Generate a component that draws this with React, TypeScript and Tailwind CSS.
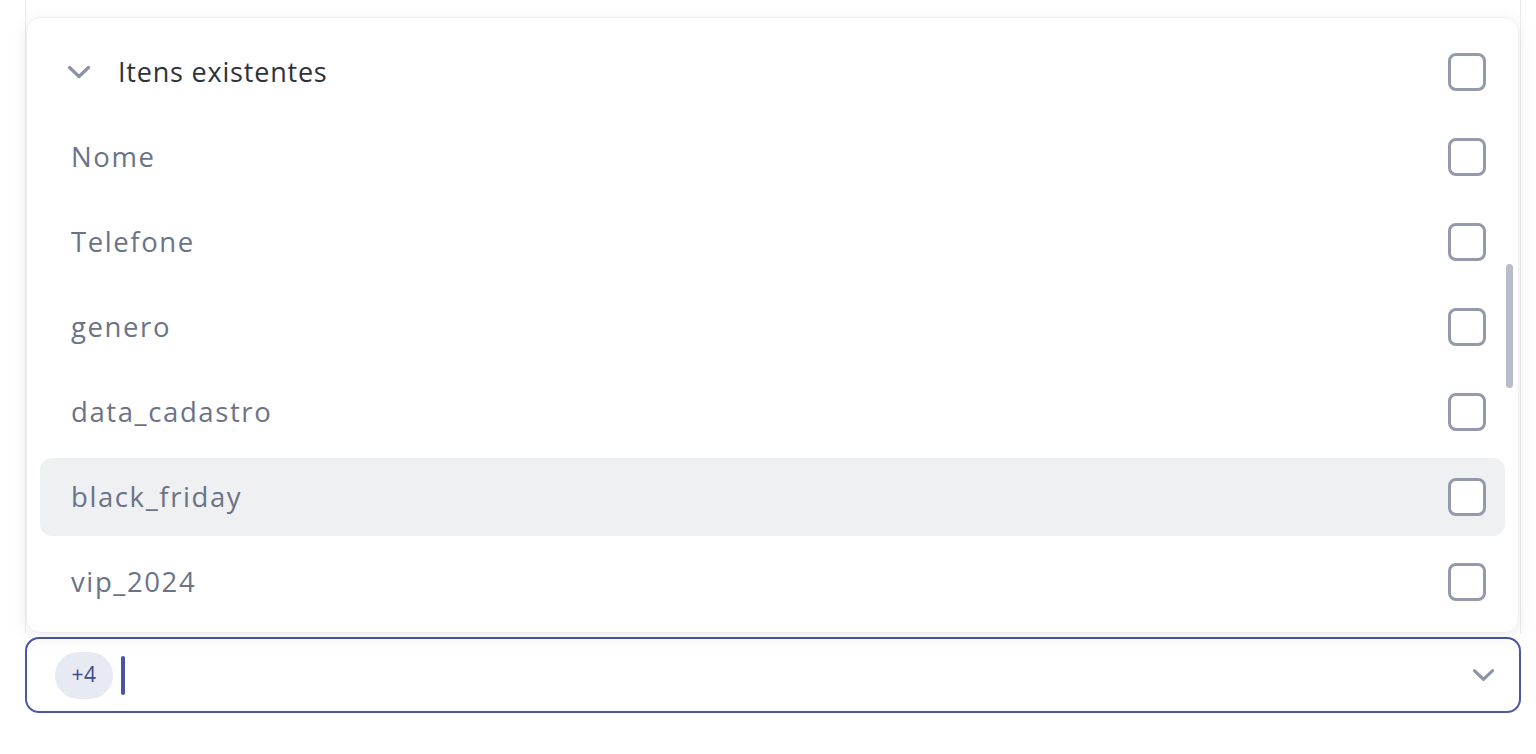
import { useState } from 'react'

const items = ['Nome', 'Telefone', 'genero', 'data_cadastro', 'black_friday', 'vip_2024']

function Box() {
  return <span className="block w-[38px] h-[38px] rounded-[8px] border-[3.5px] border-[#949aac] bg-white shrink-0" />
}

function Chevron({ className }: { className?: string }) {
  return (
    <svg viewBox="0 0 24 14" className={className} fill="none" stroke="currentColor" strokeWidth={3.2} strokeLinecap="round" strokeLinejoin="round">
      <path d="M2.5 2.5 12 11.5l9.5-9" />
    </svg>
  )
}

export default function App() {
  const [hovered] = useState('black_friday')

  return (
    <div className="min-h-screen bg-white px-[25px]" style={{ fontFamily: '"Open Sans", sans-serif' }}>
      <div className="relative w-[1496px]">
        {/* card behind the menu */}
        <div className="h-[633px] border-x border-[#ececee]" />

        {/* dropdown menu */}
        <div className="absolute left-[1px] right-[2px] top-[17px] h-[616px] rounded-[14px] border border-[#ededed] bg-white shadow-[0_4px_18px_rgba(0,0,0,0.07)] overflow-hidden">
          <div className="px-[13px] pt-[15px] flex flex-col gap-[7px]">
            <div className="h-[78px] flex items-center pl-[27px] pr-[19px]">
              <Chevron className="w-[24px] h-[14px] text-[#8b92a6]" />
              <span className="ml-[27px] flex-1 text-[27px] font-medium text-[#2e323a] tracking-[0.8px]">Itens existentes</span>
              <Box />
            </div>
            {items.map((it) => (
              <div
                key={it}
                className={`h-[78px] flex items-center pl-[31px] pr-[19px] rounded-[12px] ${it === hovered ? 'bg-[#eff0f2]' : ''}`}
              >
                <span className="flex-1 text-[27.5px] text-[#6b7387] tracking-[1.6px]">{it}</span>
                <Box />
              </div>
            ))}
          </div>
          {/* scrollbar */}
          <div className="absolute left-[1479px] top-[246px] w-[7px] h-[124px] rounded-full bg-[#b9bdc9]" />
        </div>

        {/* select input */}
        <div className="mt-[4px] h-[76px] rounded-[14px] border-2 border-[#4c56a1] bg-white flex items-center pl-[28px] pr-[24px]">
          <span className="w-[58px] h-[47px] rounded-full bg-[#e7e9f3] flex items-center justify-center text-[21px] text-[#3f4a8e] tracking-[0.5px]">+4</span>
          <span className="ml-[8px] w-[4px] h-[39px] rounded-full bg-[#4a55a0]" />
          <span className="flex-1" />
          <Chevron className="w-[23px] h-[14px] text-[#8c93a6]" />
        </div>
      </div>
    </div>
  )
}
